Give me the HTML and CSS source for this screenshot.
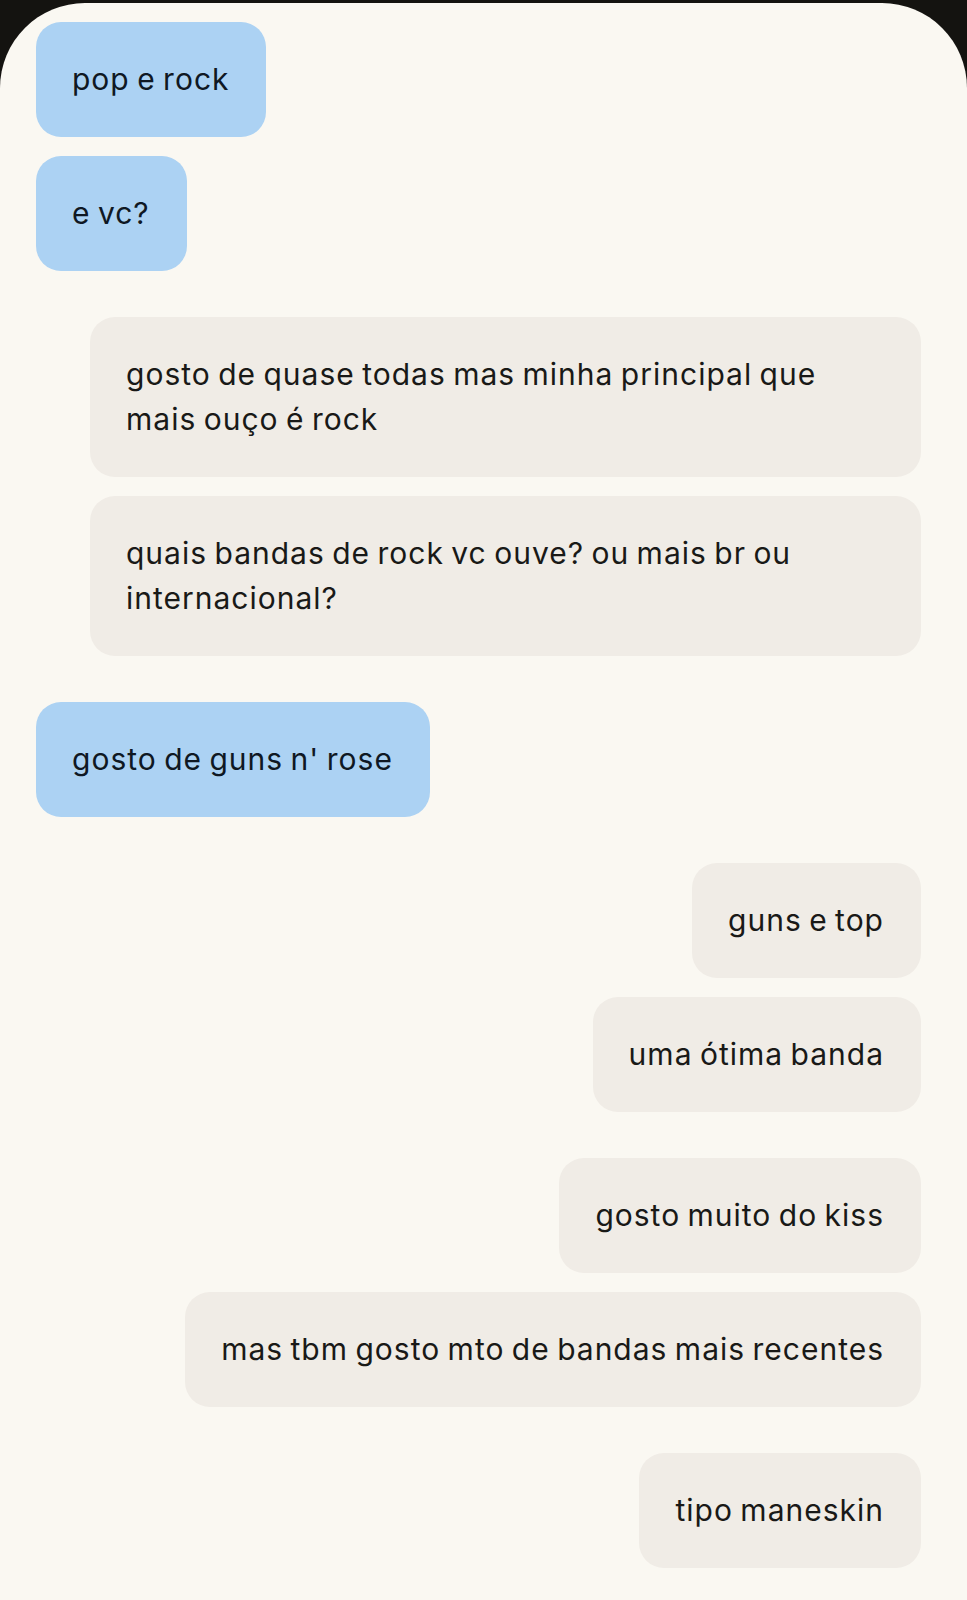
FILE: index.html
```html
<!DOCTYPE html>
<html lang="pt">
<head>
<meta charset="utf-8">
<title>Chat</title>
<link rel="stylesheet" href="styles.css">
</head>
<body>
<main class="panel">
  <div class="row left"><div class="bubble user">pop e rock</div></div>
  <div class="row left tight"><div class="bubble user">e vc?</div></div>

  <div class="row right"><div class="bubble bot wide">gosto de quase todas mas minha principal que mais ouço é rock</div></div>
  <div class="row right tight"><div class="bubble bot wide">quais bandas de rock vc ouve? ou mais br ou internacional?</div></div>

  <div class="row left"><div class="bubble user">gosto de guns n' rose</div></div>

  <div class="row right"><div class="bubble bot">guns e top</div></div>
  <div class="row right tight"><div class="bubble bot">uma ótima banda</div></div>

  <div class="row right"><div class="bubble bot">gosto muito do kiss</div></div>
  <div class="row right tight"><div class="bubble bot">mas tbm gosto mto de bandas mais recentes</div></div>

  <div class="row right"><div class="bubble bot">tipo maneskin</div></div>
</main>
</body>
</html>
```

FILE: styles.css
```css
html, body {
  margin: 0;
  padding: 0;
  background: #141310;
  height: 100%;
}

body {
  font-family: "Inter", "Noto Sans", sans-serif;
  color: #191917;
  overflow: hidden;
}

.panel {
  margin-top: 3px;
  min-height: 1597px;
  background: #faf8f2;
  border-radius: 85px 85px 0 0;
  padding: 19px 46px 0 36px;
  box-sizing: border-box;
  display: flex;
  flex-direction: column;
}

.row {
  display: flex;
  margin-top: 46px;
}

.row:first-child {
  margin-top: 0;
}

.row.tight {
  margin-top: 19px;
}

.row.left {
  justify-content: flex-start;
}

.row.right {
  justify-content: flex-end;
}

.bubble {
  font-size: 30px;
  line-height: 45px;
  padding: 35px 37px 35px 36px;
  border-radius: 25px;
  letter-spacing: 1px;
  word-spacing: -2px;
}

.bubble.user {
  background: #acd2f3;
  color: #0f1823;
}

.bubble.bot {
  background: #f0ece6;
}

.bubble.wide {
  width: 831px;
  box-sizing: border-box;
  padding-right: 76px;
}
```
